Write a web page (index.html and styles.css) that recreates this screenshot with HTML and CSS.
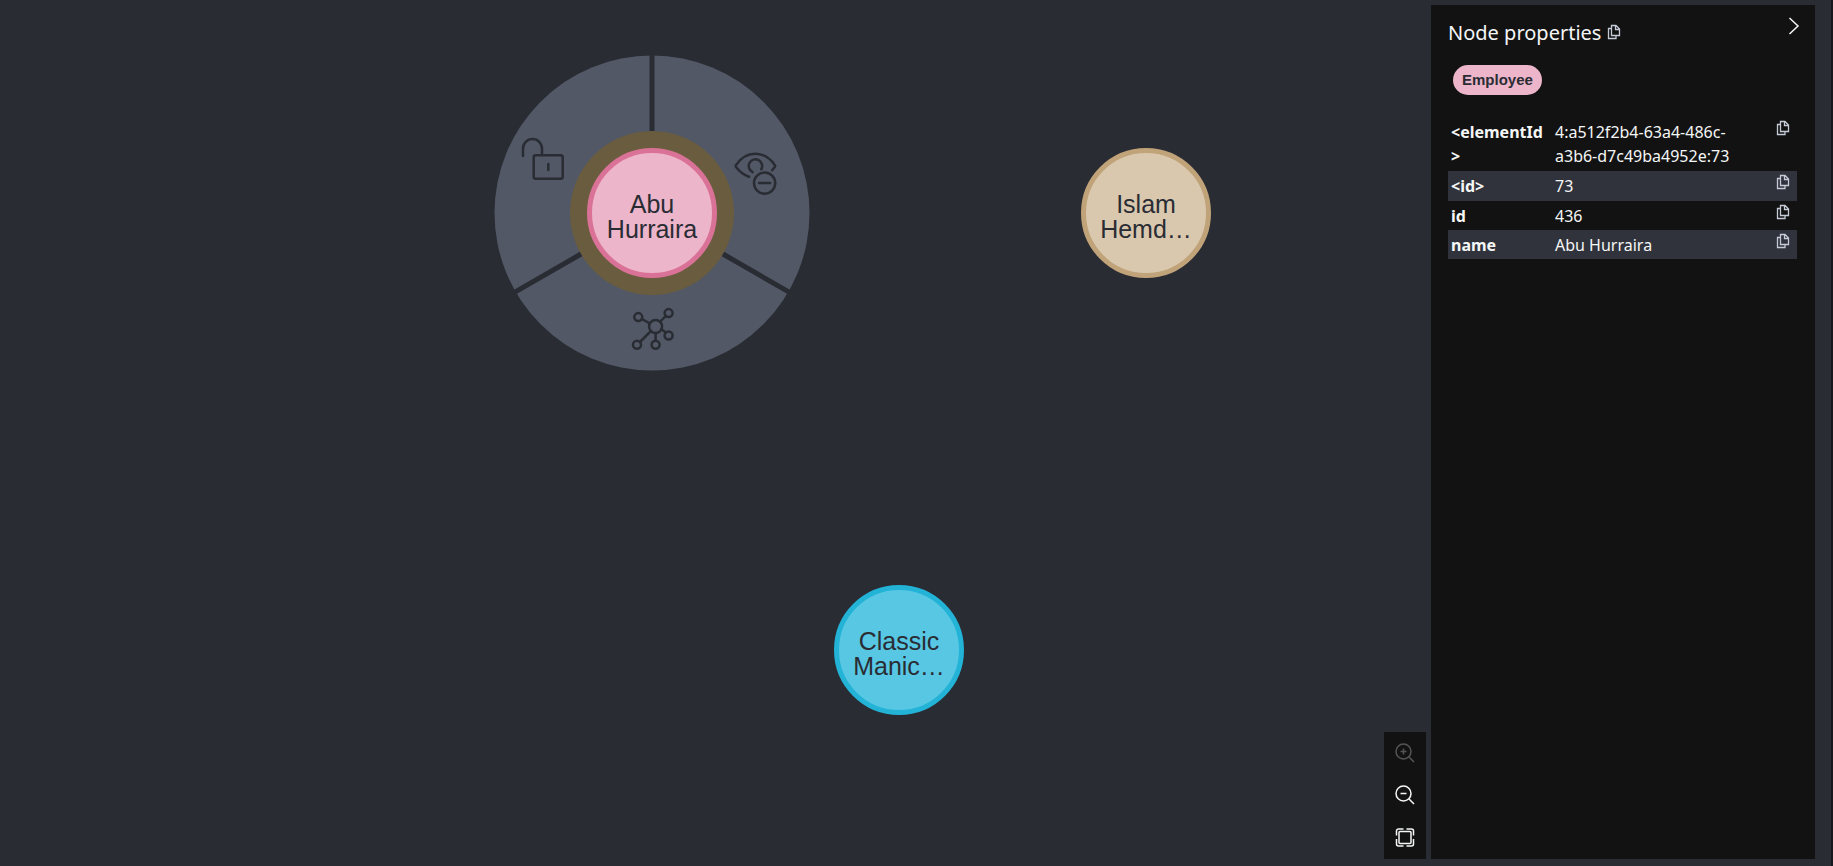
FILE: index.html
```html
<!DOCTYPE html>
<html lang="en">
<head>
<meta charset="utf-8">
<title>Graph view</title>
<link rel="stylesheet" href="styles.css">
</head>
<body>
<svg class="sprite" aria-hidden="true">
  <symbol id="copy" viewBox="0 0 14 16">
    <path d="M4.500 1.500h4.500l3.500 3.500v6.500h-8z M8.500 1.500v4h4 M4.500 4.500h-3v10h7.500v-3"/>
  </symbol>
</svg>
<div class="app">
  <main class="canvas">
    <svg class="ring" viewBox="-158 -158 316 316" aria-label="Node actions">
      <circle class="ring-disc" r="157.500"/>
      <circle class="ring-halo" r="82"/>
      <path class="ring-gap" d="M0-82V-158M71 41L138 79.700M-71 41L-138 79.700"/>
      <a href="#unlock" aria-label="Unlock node" class="ring-icon">
        <rect x="-118.300" y="-57.800" width="29" height="23.500" rx="2"/>
        <path d="M-129-57v-7.500a9.500 9.500 0 0 1 19 0v6.500M-103.700-49v6"/>
      </a>
      <a href="#hide" aria-label="Hide node" class="ring-icon">
        <path d="M97-36.200C91.500-38 87.500-41.500 84-46C83.500-46.700 83.500-47.200 84-47.900C94-63 112.500-63 122.800-47.900C123.300-47.200 123.200-46.600 122.800-46L120.200-42.900"/>
        <path d="M100.600-40.900A6.700 6.700 0 1 1 109.300-43.700"/>
        <circle cx="112.600" cy="-29.900" r="10.600"/>
        <path d="M107.200-29.900h11"/>
      </a>
      <a href="#expand" aria-label="Expand node" class="ring-icon">
        <circle cx="3.600" cy="113.500" r="6.500"/>
        <circle cx="-13.700" cy="104.100" r="4"/>
        <circle cx="16.600" cy="100.100" r="4"/>
        <circle cx="16.600" cy="122.500" r="4"/>
        <circle cx="3.600" cy="131.800" r="4"/>
        <circle cx="-15" cy="131.800" r="4"/>
        <path d="M-10.200 106l8 4.300M13.700 103l-5.300 5.500M13.800 119.500l-4.500-3.500M3.600 127.800V120M-12.100 129L-1 118"/>
      </a>
    </svg>
    <div class="node node-employee">Abu<br>Hurraira</div>
    <div class="node node-sand">Islam<br>Hemd…</div>
    <div class="node node-blue">Classic<br>Manic…</div>
  </main>
  <div class="zoom-bar">
    <button class="zoom-button" aria-label="Zoom in" disabled>
      <svg viewBox="0 0 20 20"><circle cx="8.500" cy="8.500" r="7.500"/><path d="M13.800 13.800L19 19M5.500 8.500h6M8.500 5.500v6"/></svg>
    </button>
    <button class="zoom-button" aria-label="Zoom out">
      <svg viewBox="0 0 20 20"><circle cx="8.500" cy="8.500" r="7.500"/><path d="M13.800 13.800L19 19M5.500 8.500h6"/></svg>
    </button>
    <button class="zoom-button" aria-label="Zoom to fit">
      <svg viewBox="0 0 20 20"><rect x="4" y="4.500" width="12" height="12" rx="1"/><path d="M1.500 8.500V4a2 2 0 0 1 2-2H8.500M11.500 2h5a2 2 0 0 1 2 2V8.500M18.500 12v5a2 2 0 0 1-2 2H11.500M8.500 19H3.500a2 2 0 0 1-2-2v-5"/></svg>
    </button>
  </div>
  <aside class="panel">
    <header class="panel-head">
      <h1 class="panel-title">Node properties</h1>
      <button class="copy-button" aria-label="Copy all properties"><svg><use href="#copy"/></svg></button>
      <button class="collapse" aria-label="Collapse panel"><svg viewBox="0 0 12 20"><path d="M1.500 2l8.500 8-8.500 8"/></svg></button>
    </header>
    <button class="label-pill">Employee</button>
    <table class="props">
      <tbody>
        <tr><th scope="row">&lt;elementId&gt;</th><td>4:a512f2b4-63a4-486c-a3b6-d7c49ba4952e:73</td><td class="copy-cell"><button class="copy-button" aria-label="Copy elementId"><svg><use href="#copy"/></svg></button></td></tr>
        <tr><th scope="row">&lt;id&gt;</th><td>73</td><td class="copy-cell"><button class="copy-button" aria-label="Copy internal id"><svg><use href="#copy"/></svg></button></td></tr>
        <tr><th scope="row">id</th><td>436</td><td class="copy-cell"><button class="copy-button" aria-label="Copy id"><svg><use href="#copy"/></svg></button></td></tr>
        <tr><th scope="row">name</th><td>Abu Hurraira</td><td class="copy-cell"><button class="copy-button" aria-label="Copy name"><svg><use href="#copy"/></svg></button></td></tr>
      </tbody>
    </table>
  </aside>
</div>
</body>
</html>
```
FILE: styles.css
```css
* { box-sizing: border-box; }

body {
  margin: 0;
  background: #2a2c34;
  color: #f5f6f6;
  font: 16px/24px "Noto Sans", sans-serif;
}

button {
  margin: 0;
  padding: 0;
  border: 0;
  background: none;
  color: inherit;
  font: inherit;
}

svg {
  display: block;
  fill: none;
  stroke: currentColor;
}

.sprite { position: absolute; width: 0; height: 0; }

.app {
  display: flex;
  gap: 5px;
  min-height: 100vh;
  padding: 5px 16px 7px 0;
  border-right: 2px solid #17181c;
  position: relative;
}

.canvas { flex: 1; min-width: 0; }

/* Graph canvas */
.ring {
  position: absolute;
  left: 494px;
  top: 55px;
  width: 316px;
  height: 316px;
}
.ring-disc { fill: #525865; stroke: none; }
.ring-halo { fill: #6a5c3e; stroke: none; }
.ring-gap { stroke: #2a2c34; stroke-width: 5; }
.ring-icon {
  color: #2a2c34;
  stroke-width: 2.5;
  stroke-linecap: round;
  stroke-linejoin: round;
}

.node {
  position: absolute;
  display: grid;
  align-content: center;
  width: 130px;
  height: 130px;
  padding-top: 8px;
  border: 5px solid;
  border-radius: 50%;
  color: #2a2c34;
  font: 25px/25px "Liberation Sans", Arial, sans-serif;
  text-align: center;
}
.node-employee { left: 587px; top: 148px; background: #ecb5c9; border-color: #da7298; }
.node-sand { left: 1081px; top: 148px; background: #d9c8ae; border-color: #c0a378; }
.node-blue { left: 834px; top: 585px; background: #57c7e3; border-color: #23b3d7; }

/* Zoom controls */
.zoom-bar {
  display: flex;
  flex-direction: column;
  align-self: flex-end;
  width: 42px;
  background: #121212;
  padding-bottom: 1px;
}
.zoom-button {
  display: grid;
  place-items: center;
  height: 42px;
}
.zoom-button svg { width: 20px; height: 20px; stroke-width: 1.5; }
.zoom-button:disabled { color: #555; }

/* Side panel */
.panel {
  width: 384px;
  padding: 11px 18px 16px 17px;
  background: #121212;
}
.panel-head {
  display: flex;
  align-items: flex-start;
  gap: 6px;
}
.panel-title {
  margin: 0;
  font-size: 20px;
  font-weight: 400;
  line-height: 34px;
}
.copy-button { display: block; color: #c5cbd6; }
.copy-button svg { width: 14px; height: 16px; stroke-width: 1.3; }
.panel-head > .copy-button { padding-top: 8px; }
.collapse { margin: 0 -7px 0 auto; }
.collapse svg { width: 20px; height: 20px; stroke-width: 1.5; }

.label-pill {
  display: block;
  margin: 15px 0 22px 5px;
  padding: 0 9px;
  border-radius: 15px;
  background: #ecb5c9;
  color: #2a2c34;
  font: bold 15px/30px "Liberation Sans", Arial, sans-serif;
}

.props {
  width: 100%;
  border-collapse: collapse;
  table-layout: fixed;
}
.props th,
.props td {
  padding: 3px 3px 2px;
  text-align: left;
  vertical-align: top;
  overflow-wrap: anywhere;
}
.props th { width: 104px; }
.props .copy-cell { width: 32px; padding: 3px 0 0 11px; }
.props tr:nth-child(even) { background: #30333b; }
.props tr:first-child th,
.props tr:nth-child(2) th { padding-bottom: 3px; }
```
